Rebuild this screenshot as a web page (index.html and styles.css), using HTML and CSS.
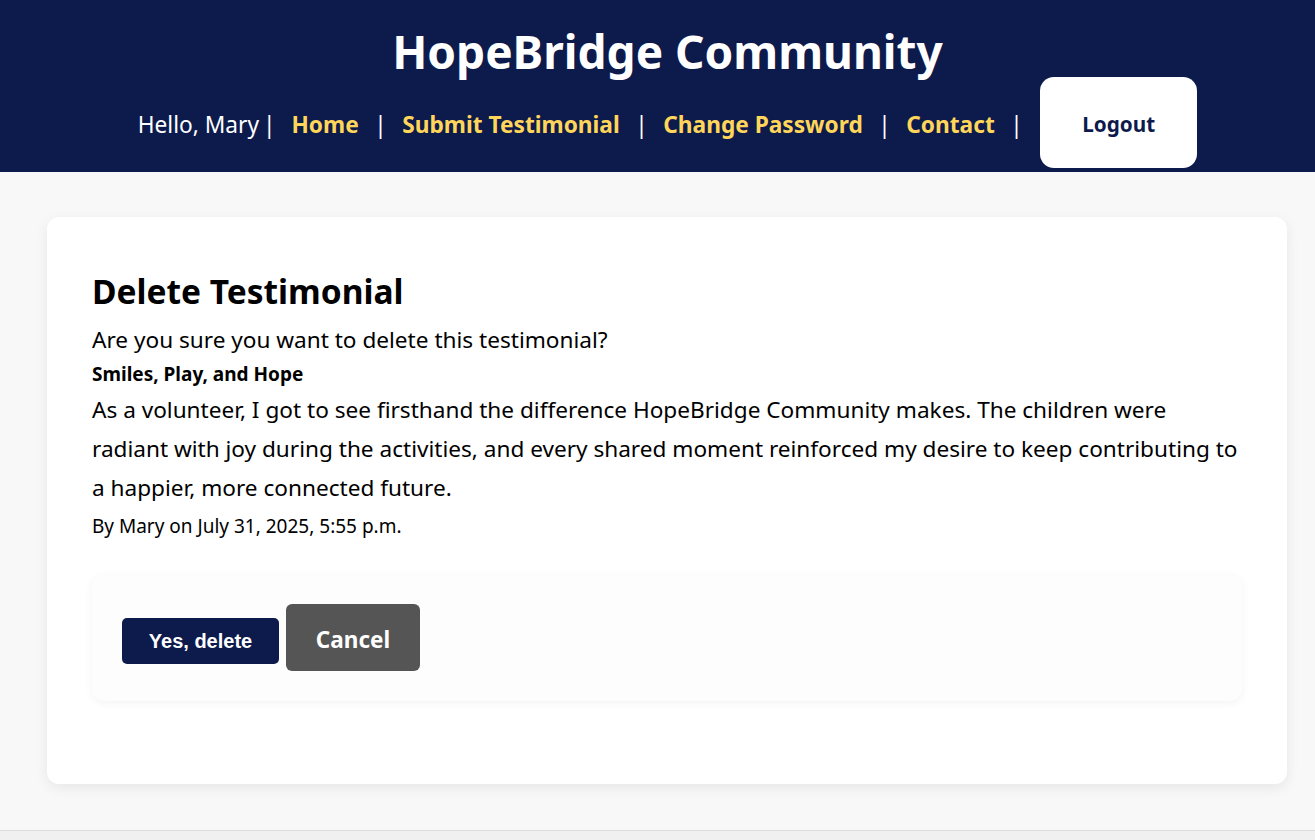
FILE: index.html
```html
<!DOCTYPE html>
<html lang="en">
<head>
<meta charset="utf-8">
<title>Delete Testimonial - HopeBridge Community</title>
<link rel="stylesheet" href="styles.css">
</head>
<body>
<header class="site-header">
  <h1 class="brand">HopeBridge Community</h1>
  <nav class="nav">
    <span class="greet">Hello, Mary</span><span class="sep sep-first">|</span>
    <a class="nav-link" href="#">Home</a><span class="sep">|</span>
    <a class="nav-link" href="#">Submit Testimonial</a><span class="sep">|</span>
    <a class="nav-link" href="#">Change Password</a><span class="sep">|</span>
    <a class="nav-link" href="#">Contact</a><span class="sep sep-last">|</span>
    <button class="logout" type="button">Logout</button>
  </nav>
</header>
<main class="card">
  <h2 class="title">Delete Testimonial</h2>
  <p class="question">Are you sure you want to delete this testimonial?</p>
  <h3 class="t-title">Smiles, Play, and Hope</h3>
  <p class="t-body">As a volunteer, I got to see firsthand the difference HopeBridge Community makes. The children were radiant with joy during the activities, and every shared moment reinforced my desire to keep contributing to a happier, more connected future.</p>
  <p class="t-meta">By Mary on July 31, 2025, 5:55 p.m.</p>
  <form class="actions">
    <button class="btn-delete" type="button">Yes, delete</button>
    <a class="btn-cancel" href="#">Cancel</a>
  </form>
</main>
<footer class="footer"></footer>
</body>
</html>
```
FILE: styles.css
```css
* { box-sizing: border-box; }
html, body { margin: 0; padding: 0; }
body {
  background: #f8f8f8;
  font-family: "Noto Sans", "Open Sans", sans-serif;
  color: #000;
}
.site-header {
  background: #0d1b4c;
  text-align: center;
  padding: 25px 0 4px 20px;
}
.brand {
  margin: 0;
  color: #fff;
  font-size: 46px;
  line-height: 52px;
  font-weight: 700;
}
.nav {
  display: flex;
  justify-content: center;
  align-items: center;
  color: #fff;
  font-size: 22.7px;
}
.greet, .sep, .nav-link { padding-top: 3px; }
.greet { font-weight: 400; }
.sep { margin: 0 15.5px; }
.sep-first { margin-left: 4px; margin-right: 16px; }
.sep-last { margin-right: 17.5px; }
.nav-link {
  color: #ffd65a;
  font-weight: 700;
  text-decoration: none;
}
.logout {
  width: 157px;
  height: 91px;
  background: #fff;
  border: none;
  border-radius: 14px;
  color: #0d1b4c;
  font-family: inherit;
  font-size: 20.7px;
  font-weight: 700;
  padding-top: 4px;
}
.card {
  display: block;
  margin: 45px 28px 46px 47px;
  background: #fff;
  border-radius: 12px;
  padding: 45px 45px 83px;
  box-shadow: 0 4px 14px rgba(0, 0, 0, 0.07);
}
.title {
  margin: 9px 0 0;
  font-size: 33.5px;
  line-height: 40px;
  font-weight: 700;
}
.question {
  margin: 11px 0 0;
  font-size: 22.6px;
  line-height: 36px;
}
.t-title {
  margin: 0;
  font-size: 19px;
  line-height: 32px;
  font-weight: 700;
}
.t-body {
  margin: 0;
  font-size: 22.6px;
  line-height: 39px;
}
.t-meta {
  margin: 0;
  font-size: 19px;
  line-height: 38px;
}
.actions {
  margin-top: 30px;
  display: flex;
  align-items: center;
  gap: 7px;
  padding: 29px 30px 30px;
  background: #fdfdfd;
  border-radius: 12px;
  box-shadow: 0 2px 10px rgba(0, 0, 0, 0.05);
}
.btn-delete {
  width: 157px;
  height: 46px;
  margin-top: 7px;
  background: #0d1b4c;
  color: #fff;
  border: none;
  border-radius: 5px;
  font-family: "Liberation Sans", Arial, sans-serif;
  font-weight: 700;
  font-size: 20px;
}
.btn-cancel {
  display: flex;
  align-items: center;
  justify-content: center;
  width: 134px;
  height: 67px;
  padding-top: 3px;
  background: #555;
  color: #fff;
  border-radius: 6px;
  font-weight: 700;
  font-size: 22.5px;
  text-decoration: none;
}
.footer {
  border-top: 1px solid #dcdcdc;
  background: #f0f0f0;
  height: 40px;
}
```
